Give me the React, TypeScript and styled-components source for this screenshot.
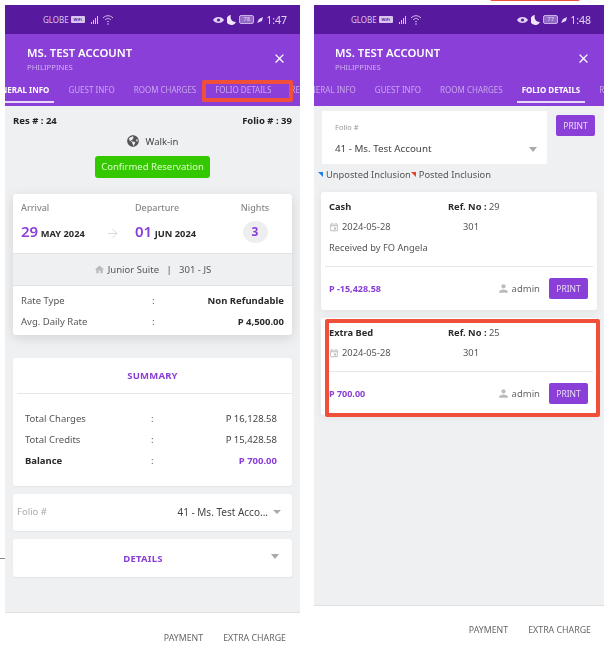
import React from 'react'
import styled, { createGlobalStyle } from 'styled-components'
import { ArrowRight } from 'lucide-react'
import { FaGlobeAmericas } from 'react-icons/fa'
import { MdClose, MdHome, MdPerson, MdOutlineEvent } from 'react-icons/md'

const purple = '#8a40d8'

const Global = createGlobalStyle`
html, body { margin: 0; padding: 0; background: #fff; }
body { font-family: "Noto Sans", "Open Sans", sans-serif; color: #3a3a3a; }
* { box-sizing: border-box; }
`

const Page = styled.div`
width: 612px;
height: 652px;
overflow: hidden;
position: relative;
display: flex;
gap: 14px;
padding: 5px 0 0 5px;
filter: blur(0.3px);
`

const Phone = styled.div<{ $w: number }>`
width: ${p => p.$w}px;
display: flex;
flex-direction: column;
position: relative;
`

const StatusBar = styled.div<{ $left: number }>`
height: 29px;
background: #571a9f;
color: #d8c4ee;
display: flex;
align-items: center;
padding: 0 13px 0 ${p => p.$left}px;
font-size: 8px;
`
const Carrier = styled.span`
display: flex;
align-items: center;
gap: 2px;
`
const WifiTag = styled.span`
background: #d8c4ee;
color: #571a9f;
font-size: 4px;
font-weight: 700;
padding: 1px;
border-radius: 1px;
width: 14px;
height: 7px;
text-align: center;
line-height: 5px;
`
const Status = styled.span`
margin-left: auto;
display: flex;
align-items: center;
gap: 3px;
font-size: 10.5px;
color: #e3d4f3;
`
const BatteryBox = styled.span`
font-size: 6px;
width: 15px;
height: 9px;
text-align: center;
background: #9168c4;
border: 1px solid #c9b0e6;
border-radius: 2px;
line-height: 7px;
`

const Header = styled.div`
background: ${purple};
height: 72px;
color: #fff;
position: relative;
overflow: hidden;
`
const GuestRow = styled.div<{ $left: number }>`
display: flex;
justify-content: space-between;
align-items: center;
padding: 8px 13px 0 ${p => p.$left}px;
height: 41px;
`
const GuestName = styled.div`
font-size: 11.3px;
font-weight: 600;
line-height: 16px;
`
const GuestCountry = styled.div`
font-size: 7.7px;
color: #d0b0f0;
line-height: 12px;
`
const Tabs = styled.div<{ $shift: number }>`
display: flex;
margin-left: ${p => p.$shift}px;
width: 500px;
height: 31px;
`
const Tab = styled.div<{ $active?: boolean }>`
flex: none;
padding: 0 4.5px;
margin-right: 10px;
font-size: 8px;
font-weight: ${p => (p.$active ? 700 : 400)};
color: ${p => (p.$active ? '#fff' : '#c9a6ee')};
line-height: 29px;
height: 28px;
white-space: nowrap;
border-bottom: ${p => (p.$active ? '2px solid #e6d8f6' : 'none')};
`

const Body = styled.div<{ $h: number }>`
background: #eff0f2;
height: ${p => p.$h}px;
border-bottom: 1px solid #e0e0e0;
padding: 0 8px;
`

const TopInfo = styled.div`
display: flex;
justify-content: space-between;
padding-top: 7px;
font-size: 9.5px;
font-weight: 700;
color: #222;
line-height: 15px;
`
const Source = styled.div`
display: flex;
justify-content: center;
align-items: center;
gap: 7px;
margin-top: 3px;
height: 20px;
font-size: 9.5px;
color: #444;
svg { color: #555; font-size: 12px; }
`
const StatusPill = styled.div`
width: 115px;
height: 22px;
margin: 5px auto 0 auto;
background: #33c800;
border-radius: 3px;
color: #dcffc8;
font-size: 9.5px;
line-height: 21px;
text-align: center;
`

const Card = styled.div<{ $mt: number; $shadow?: boolean }>`
background: #fff;
border-radius: 3px;
margin-top: ${p => p.$mt}px;
overflow: hidden;
box-shadow: ${p => (p.$shadow ? '0 3px 12px rgba(0,0,0,0.12)' : '0 1px 2px rgba(0,0,0,0.05)')};
`
const Stay = styled.div`
height: 59px;
display: grid;
grid-template-columns: 114px 90px 60px;
padding: 7px 0 0 8px;
`
const StayLabel = styled.div<{ $center?: boolean }>`
font-size: 9px;
color: #888;
line-height: 14px;
font-weight: 500;
text-align: ${p => (p.$center ? 'center' : 'left')};
`
const DateLine = styled.div`
display: flex;
align-items: baseline;
gap: 2.5px;
margin-top: 4px;
font-size: 9.3px;
font-weight: 700;
color: #2a2a2a;
position: relative;
b { font-size: 15px; color: ${purple}; font-weight: 600; line-height: 24px; }
`
const NightBadge = styled.div`
width: 25px;
height: 22px;
border-radius: 50%;
background: #eeeef0;
color: ${purple};
font-size: 12px;
font-weight: 700;
line-height: 22px;
text-align: center;
margin: 6px auto 0 auto;
`
const ArrowIcon = styled.span`
position: absolute;
left: 84px;
top: 7px;
color: #c4c4c4;
line-height: 0;
`
const RoomBar = styled.div`
height: 33px;
background: #eff0f2;
border-top: 1px solid #e2e2e6;
border-bottom: 1px solid #e2e2e6;
display: flex;
align-items: center;
justify-content: center;
gap: 3px;
font-size: 9.5px;
color: #555;
svg { color: #bbb; font-size: 11px; }
`
const Row = styled.div<{ $pl: number; $pr: number; $cols: string }>`
display: grid;
grid-template-columns: ${p => p.$cols};
padding: 0 ${p => p.$pr}px 0 ${p => p.$pl}px;
height: 21px;
align-items: center;
font-size: 9.5px;
color: #555;
`
const RateRows = styled.div`
padding: 4px 0 3px 0;
`
const SummaryRows = styled.div`
padding: 14px 0 15px 0;
`
const Strong = styled.span`
font-weight: 700;
color: #2a2a2a;
`
const Money = styled.span<{ $purple?: boolean; $bold?: boolean }>`
text-align: right;
white-space: nowrap;
color: ${p => (p.$purple ? purple : '#444')};
font-weight: ${p => (p.$bold ? 700 : 400)};
`
const CardTitle = styled.div<{ $h: number; $pr?: number }>`
height: ${p => p.$h}px;
display: flex;
align-items: center;
justify-content: center;
padding-right: ${p => p.$pr || 0}px;
font-size: 9.5px;
font-weight: 700;
color: ${purple};
letter-spacing: 0.2px;
position: relative;
`
const Rule = styled.div<{ $ml?: number; $mr?: number; $mt?: number }>`
height: 1px;
background: #e6e6e8;
margin: ${p => p.$mt || 0}px ${p => p.$mr || 0}px 0 ${p => p.$ml || 0}px;
`
const Caret = styled.span<{ $big?: boolean }>`
display: inline-block;
border-left: ${p => (p.$big ? 4.5 : 4)}px solid transparent;
border-right: ${p => (p.$big ? 4.5 : 4)}px solid transparent;
border-top: ${p => (p.$big ? 5 : 4)}px solid #aaa;
`
const FolioLine = styled.div`
height: 37px;
display: flex;
align-items: center;
justify-content: space-between;
padding: 0 11px 2px 4px;
font-size: 10px;
color: #444;
`
const Muted = styled.span`
color: #aaa;
font-size: 9.5px;
`
const SelectValue = styled.span`
display: flex;
align-items: center;
gap: 5px;
`
const DetailsCaret = styled.span`
position: absolute;
right: 13px;
top: 15px;
line-height: 0;
`

const Footer = styled.div<{ $pr: number; $pt: number }>`
display: flex;
justify-content: flex-end;
gap: 20px;
padding: ${p => p.$pt}px ${p => p.$pr}px 0 0;
font-size: 8.8px;
color: #666;
line-height: 14px;
`

const SelectRow = styled.div`
display: flex;
align-items: flex-start;
gap: 9px;
padding-top: 5px;
`
const FolioSelect = styled.div`
width: 225px;
height: 53px;
background: #fff;
padding: 10px 10px 0 13px;
border-radius: 0 0 2px 2px;
`
const SelectLabel = styled.div`
font-size: 7.5px;
color: #999;
line-height: 12px;
`
const SelectLine = styled.div`
display: flex;
justify-content: space-between;
align-items: center;
margin-top: 8px;
font-size: 9.8px;
color: #444;
line-height: 16px;
`
const PrintButton = styled.div<{ $mt?: number }>`
width: 39px;
height: 21px;
flex: none;
background: ${purple};
border-radius: 2px;
color: #e8dcf7;
font-size: 8.5px;
line-height: 21px;
text-align: center;
margin-top: ${p => p.$mt || 0}px;
`
const Legend = styled.div`
display: flex;
align-items: center;
height: 16px;
margin-top: 2px;
font-size: 9.3px;
color: #555;
margin-left: -4px;
`
const Flag = styled.span<{ $c: string }>`
display: inline-block;
width: 0;
height: 0;
border-top: 5px solid ${p => p.$c};
border-left: 5px solid transparent;
margin: 0 3px 0 0;
`
const Tx = styled.div<{ $mt: number }>`
background: #fff;
border-radius: 3px;
margin: ${p => p.$mt}px 0 0 -1px;
width: 276px;
box-shadow: 0 2px 8px rgba(0,0,0,0.06);
`
const TxLine = styled.div`
display: grid;
grid-template-columns: 119px 1fr;
padding: 0 8px;
height: 21px;
align-items: center;
font-size: 9.3px;
color: #555;
`
const TxHead = styled(TxLine)`
height: 24px;
padding-top: 4px;
`
const DateCell = styled.span`
display: flex;
align-items: center;
gap: 3px;
svg { color: #bbb; font-size: 10px; }
`
const RoomCell = styled.span`
padding-left: 15px;
`
const TxFoot = styled.div`
display: flex;
align-items: center;
height: 43px;
padding: 0 9px 0 8px;
font-size: 9.5px;
color: #666;
svg { color: #bbb; font-size: 13px; }
`
const TxAmount = styled.span`
font-weight: 700;
color: ${purple};
font-size: 9px;
margin-right: auto;
`
const Admin = styled.span`
display: flex;
align-items: center;
gap: 2px;
margin-right: 9px;
`

const Highlight = styled.div<{ $x: number; $y: number; $w: number; $h: number; $b: number }>`
position: absolute;
left: ${p => p.$x}px;
top: ${p => p.$y}px;
width: ${p => p.$w}px;
height: ${p => p.$h}px;
border: ${p => p.$b}px solid #f0503a;
border-radius: 2px;
`
const EdgeTick = styled.div`
position: absolute;
left: 0;
top: 558px;
width: 5px;
height: 1px;
background: #888;
`

const StatusIcons = ({ level, time }: { level: string; time: string }) => (
    <Status>
        <svg width="11" height="8" viewBox="0 0 11 8"><path d="M0 4c2-4 9-4 11 0-2 4-9 4-11 0z" fill="#e3d4f3" /><circle cx="5.5" cy="4" r="1.6" fill="#571a9f" /></svg>
        <svg width="9" height="10" viewBox="0 0 9 10"><path d="M4 0a5 5 0 1 0 5 7A5 5 0 0 1 4 0z" fill="#efe6f9" /></svg>
        <BatteryBox>{level}</BatteryBox>
        <svg width="6" height="6" viewBox="0 0 6 6"><path d="M0 6l2-4 4-2-1 4z" fill="#e3d4f3" /></svg>
        {time}
    </Status>
)

const Carrierbar = () => (
    <Carrier>
        GLOBE <WifiTag>WiFi</WifiTag>
        <svg width="24" height="10" viewBox="0 0 24 10" style={{ marginLeft: 3 }}>
            <path d="M1 9h1V7H1zM3 9h1V5H3zM5 9h1V3H5zM7 9h1V1H7z" fill="#d8c4ee" />
            <path d="M13 3c3-3 7-3 10 0M15 5c2-2 4-2 6 0M17 7c1-1 1-1 2 0" stroke="#d8c4ee" fill="none" />
            <circle cx="18" cy="9" r="0.8" fill="#d8c4ee" />
        </svg>
    </Carrier>
)

const TabBar = ({ active, shift }: { active: string; shift: number }) => (
    <Tabs $shift={shift}>
        {['GENERAL INFO', 'GUEST INFO', 'ROOM CHARGES', 'FOLIO DETAILS', 'RESERVATION'].map(t => (
            <Tab key={t} $active={t === active}>{t}</Tab>
        ))}
    </Tabs>
)

const Transaction = ({ title, refNo, note, amount, mt }: { title: string; refNo: number; note?: string; amount: string; mt: number }) => (
    <Tx $mt={mt}>
        <TxHead>
            <Strong>{title}</Strong>
            <span><Strong>Ref. No :</Strong> {refNo}</span>
        </TxHead>
        <TxLine>
            <DateCell><MdOutlineEvent />2024-05-28</DateCell>
            <RoomCell>301</RoomCell>
        </TxLine>
        {note && <TxLine>{note}</TxLine>}
        <Rule $mt={8} $ml={4} $mr={4} />
        <TxFoot>
            <TxAmount>{amount}</TxAmount>
            <Admin><MdPerson />admin</Admin>
            <PrintButton>PRINT</PrintButton>
        </TxFoot>
    </Tx>
)

const App = () => {
    const rateCols = '131px 1fr auto'
    const sumCols = '126px 1fr auto'
    return (
        <Page>
            <Global />
            <EdgeTick />
            <Phone $w={295}>
                <StatusBar $left={38}>
                    <Carrierbar />
                    <StatusIcons level="78" time="1:47" />
                </StatusBar>
                <Header>
                    <GuestRow $left={22}>
                        <div>
                            <GuestName>MS. TEST ACCOUNT</GuestName>
                            <GuestCountry>PHILIPPINES</GuestCountry>
                        </div>
                        <MdClose size={15} />
                    </GuestRow>
                    <TabBar active="GENERAL INFO" shift={-19} />
                </Header>
                <Body $h={507}>
                    <TopInfo><span>Res # : 24</span><span>Folio # : 39</span></TopInfo>
                    <Source><FaGlobeAmericas />Walk-in</Source>
                    <StatusPill>Confirmed Reservation</StatusPill>
                    <Card $mt={16} $shadow>
                        <Stay>
                            <div>
                                <StayLabel>Arrival</StayLabel>
                                <DateLine><b>29</b> MAY 2024<ArrowIcon><ArrowRight size={15} strokeWidth={1} /></ArrowIcon></DateLine>
                            </div>
                            <div>
                                <StayLabel>Departure</StayLabel>
                                <DateLine><b>01</b> JUN 2024</DateLine>
                            </div>
                            <div>
                                <StayLabel $center>Nights</StayLabel>
                                <NightBadge>3</NightBadge>
                            </div>
                        </Stay>
                        <RoomBar><MdHome />Junior Suite &nbsp;&nbsp;|&nbsp;&nbsp; 301 - JS</RoomBar>
                        <RateRows>
                            <Row $pl={8} $pr={8} $cols={rateCols}>
                                <span>Rate Type</span><span>:</span><Money $bold><Strong>Non Refundable</Strong></Money>
                            </Row>
                            <Row $pl={8} $pr={8} $cols={rateCols}>
                                <span>Avg. Daily Rate</span><span>:</span><Money $bold><Strong>P 4,500.00</Strong></Money>
                            </Row>
                        </RateRows>
                    </Card>
                    <Card $mt={23}>
                        <CardTitle $h={35}>SUMMARY</CardTitle>
                        <Rule $ml={4} />
                        <SummaryRows>
                            <Row $pl={12} $pr={15} $cols={sumCols}><span>Total Charges</span><span>:</span><Money>P 16,128.58</Money></Row>
                            <Row $pl={12} $pr={15} $cols={sumCols}><span>Total Credits</span><span>:</span><Money>P 15,428.58</Money></Row>
                            <Row $pl={12} $pr={15} $cols={sumCols}><Strong>Balance</Strong><span>:</span><Money $purple $bold>P 700.00</Money></Row>
                        </SummaryRows>
                    </Card>
                    <Card $mt={8}>
                        <FolioLine>
                            <Muted>Folio #</Muted>
                            <SelectValue>41 - Ms. Test Acco... <Caret /></SelectValue>
                        </FolioLine>
                    </Card>
                    <Card $mt={8}>
                        <CardTitle $h={38} $pr={19}>
                            DETAILS
                            <DetailsCaret><Caret $big /></DetailsCaret>
                        </CardTitle>
                    </Card>
                </Body>
                <Footer $pr={14} $pt={18}><span>PAYMENT</span><span>EXTRA CHARGE</span></Footer>
            </Phone>
            <Phone $w={290}>
                <StatusBar $left={37}>
                    <Carrierbar />
                    <StatusIcons level="77" time="1:48" />
                </StatusBar>
                <Header>
                    <GuestRow $left={21}>
                        <div>
                            <GuestName>MS. TEST ACCOUNT</GuestName>
                            <GuestCountry>PHILIPPINES</GuestCountry>
                        </div>
                        <MdClose size={15} />
                    </GuestRow>
                    <TabBar active="FOLIO DETAILS" shift={-19} />
                </Header>
                <Body $h={500}>
                    <SelectRow>
                        <FolioSelect>
                            <SelectLabel>Folio #</SelectLabel>
                            <SelectLine>41 - Ms. Test Account <Caret $big /></SelectLine>
                        </FolioSelect>
                        <PrintButton $mt={4}>PRINT</PrintButton>
                    </SelectRow>
                    <Legend>
                        <Flag $c="#1f7fe0" />Unposted Inclusion<Flag $c="#e8402a" />Posted Inclusion
                    </Legend>
                    <Transaction title="Cash" refNo={29} note="Received by FO Angela" amount="P -15,428.58" mt={10} />
                    <Transaction title="Extra Bed" refNo={25} amount="P 700.00" mt={8} />
                </Body>
                <Footer $pr={13} $pt={17}><span>PAYMENT</span><span>EXTRA CHARGE</span></Footer>
            </Phone>
            <Highlight $x={202} $y={80} $w={91} $h={22} $b={4} />
            <Highlight $x={325} $y={319} $w={275} $h={98} $b={4} />
            <Highlight $x={490} $y={-3} $w={90} $h={4} $b={2} />
        </Page>
    )
}

export default App
